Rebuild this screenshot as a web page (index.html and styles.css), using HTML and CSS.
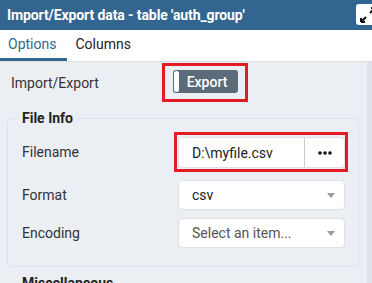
FILE: index.html
```html
<!DOCTYPE html>
<html lang="en">
<head>
  <meta charset="UTF-8">
  <title>Import/Export data</title>
  <link rel="stylesheet" href="styles.css">
</head>
<body>

<div class="dialog">
  <div class="dialog-header">
    <span class="dialog-title">Import/Export data - table 'auth_group'</span>
    <button class="maximize" aria-label="Maximize">
      <svg width="20" height="20" viewBox="0 0 20 20">
        <path d="M3 17 L8 12 M3 17 V13 M3 17 H7" stroke="#111" stroke-width="2" fill="none"/>
        <path d="M17 3 L12 8 M17 3 V7 M17 3 H13" stroke="#111" stroke-width="2" fill="none"/>
      </svg>
    </button>
  </div>

  <div class="tabs">
    <div class="tab active">Options</div>
    <div class="tab">Columns</div>
  </div>

  <div class="content">
    <div class="panel">
      <div class="row top-row">
        <label class="row-label">Import/Export</label>
        <div class="highlight toggle-box">
          <div class="toggle">
            <span class="knob"></span>
            <span class="toggle-text">Export</span>
          </div>
        </div>
      </div>

      <fieldset class="group">
        <legend>File Info</legend>
        <div class="field">
          <label class="field-label">Filename</label>
          <div class="highlight file-box">
            <div class="input file-input">
              <span class="value">D:\myfile.csv</span>
              <span class="browse">
                <svg width="14" height="4" viewBox="0 0 14 4">
                  <circle cx="2" cy="2" r="1.8" fill="#111"/>
                  <circle cx="7" cy="2" r="1.8" fill="#111"/>
                  <circle cx="12" cy="2" r="1.8" fill="#111"/>
                </svg>
              </span>
            </div>
          </div>
        </div>
        <div class="field">
          <label class="field-label">Format</label>
          <div class="input select">
            <span class="value">csv</span>
            <span class="caret"></span>
          </div>
        </div>
        <div class="field">
          <label class="field-label">Encoding</label>
          <div class="input select">
            <span class="value placeholder">Select an item...</span>
            <span class="caret"></span>
          </div>
        </div>
      </fieldset>

      <fieldset class="group misc">
        <legend>Miscellaneous</legend>
      </fieldset>
    </div>
    <div class="scrollbar"></div>
  </div>
</div>

</body>
</html>
```

FILE: styles.css
```css
body {
  font-family: Roboto, "Liberation Sans", sans-serif;
  margin: 0;
  width: 372px;
  height: 283px;
  overflow: hidden;
  background: #ebeef3;
  color: #222;
}
.dialog {
  display: flex;
  flex-direction: column;
  height: 283px;
}
.dialog-header {
  flex-shrink: 0;
  height: 30px;
  background: #326690;
  display: flex;
  align-items: center;
  justify-content: space-between;
  padding-left: 7px;
  overflow: hidden;
}
.dialog-title {
  color: #fff;
  font-weight: bold;
  font-size: 14px;
  letter-spacing: -0.1px;
}
.maximize {
  width: 24px;
  height: 21px;
  margin-right: -8px;
  margin-top: -1px;
  background: #fff;
  border: none;
  border-radius: 3px;
  padding: 0;
  display: flex;
  align-items: center;
  justify-content: center;
}
.tabs {
  flex-shrink: 0;
  height: 31px;
  background: #fff;
  border-bottom: 1px solid #dde0e6;
  display: flex;
}
.tab {
  font-size: 14px;
  color: #222;
  padding: 0 11px 0 8px;
  line-height: 28px;
  border-bottom: 3px solid transparent;
}
.tab.active {
  color: #326690;
  border-bottom-color: #326690;
}
.content {
  flex: 1;
  min-height: 0;
  overflow: hidden;
  display: flex;
}
.panel {
  flex: 1;
}
.scrollbar {
  width: 8px;
  background: #dfe2e8;
}
.highlight {
  border: 3px solid #e31b23;
}
.row {
  display: flex;
  align-items: center;
}
.top-row {
  margin-top: 1px;
}
.row-label {
  font-size: 14px;
  color: #333;
  width: 151px;
  padding-left: 11px;
}
.toggle-box {
  padding: 4px 7px 6px 8px;
}
.toggle {
  width: 65px;
  height: 23px;
  background: #5b6b7a;
  border-radius: 3px;
  display: flex;
  align-items: center;
  position: relative;
}
.knob {
  position: absolute;
  left: 1px;
  top: 1px;
  width: 5px;
  height: 21px;
  background: #fff;
  border-radius: 3px;
}
.toggle-text {
  flex: 1;
  text-align: center;
  color: #fff;
  font-size: 14px;
  font-weight: 500;
  padding-left: 3px;
}
.group {
  margin: 8px 8px 0 7px;
  border: 1px solid #dde0e6;
  border-radius: 5px;
  padding: 6px 10px 18px 14px;
}
.group legend {
  font-size: 14px;
  font-weight: bold;
  padding: 0 4px;
  margin-left: -4px;
  color: #222;
}
.misc {
  margin-top: 8px;
  min-height: 30px;
}
.field {
  display: flex;
  align-items: center;
  margin-top: 8px;
}
.field:first-of-type {
  margin-top: 0;
}
.field-label {
  width: 156px;
  font-size: 14px;
  color: #333;
}
.file-box {
  margin-left: -4px;
  padding: 2px 0 1px 1px;
}
.input {
  width: 167px;
  height: 30px;
  box-sizing: border-box;
  background: #fff;
  border: 1px solid #dde0e6;
  border-radius: 4px;
  display: flex;
  align-items: center;
  font-size: 14px;
}
.file-input {
  height: 31px;
}
.value {
  flex: 1;
  padding-left: 13px;
  color: #222;
}
.placeholder {
  color: #555;
}
.browse {
  width: 40px;
  height: 29px;
  box-sizing: border-box;
  border-left: 1px solid #c8ccd3;
  border-radius: 0 4px 4px 0;
  display: flex;
  align-items: center;
  justify-content: center;
}
.caret {
  width: 0;
  height: 0;
  border-left: 4px solid transparent;
  border-right: 4px solid transparent;
  border-top: 5px solid #999;
  margin-right: 9px;
}
```
